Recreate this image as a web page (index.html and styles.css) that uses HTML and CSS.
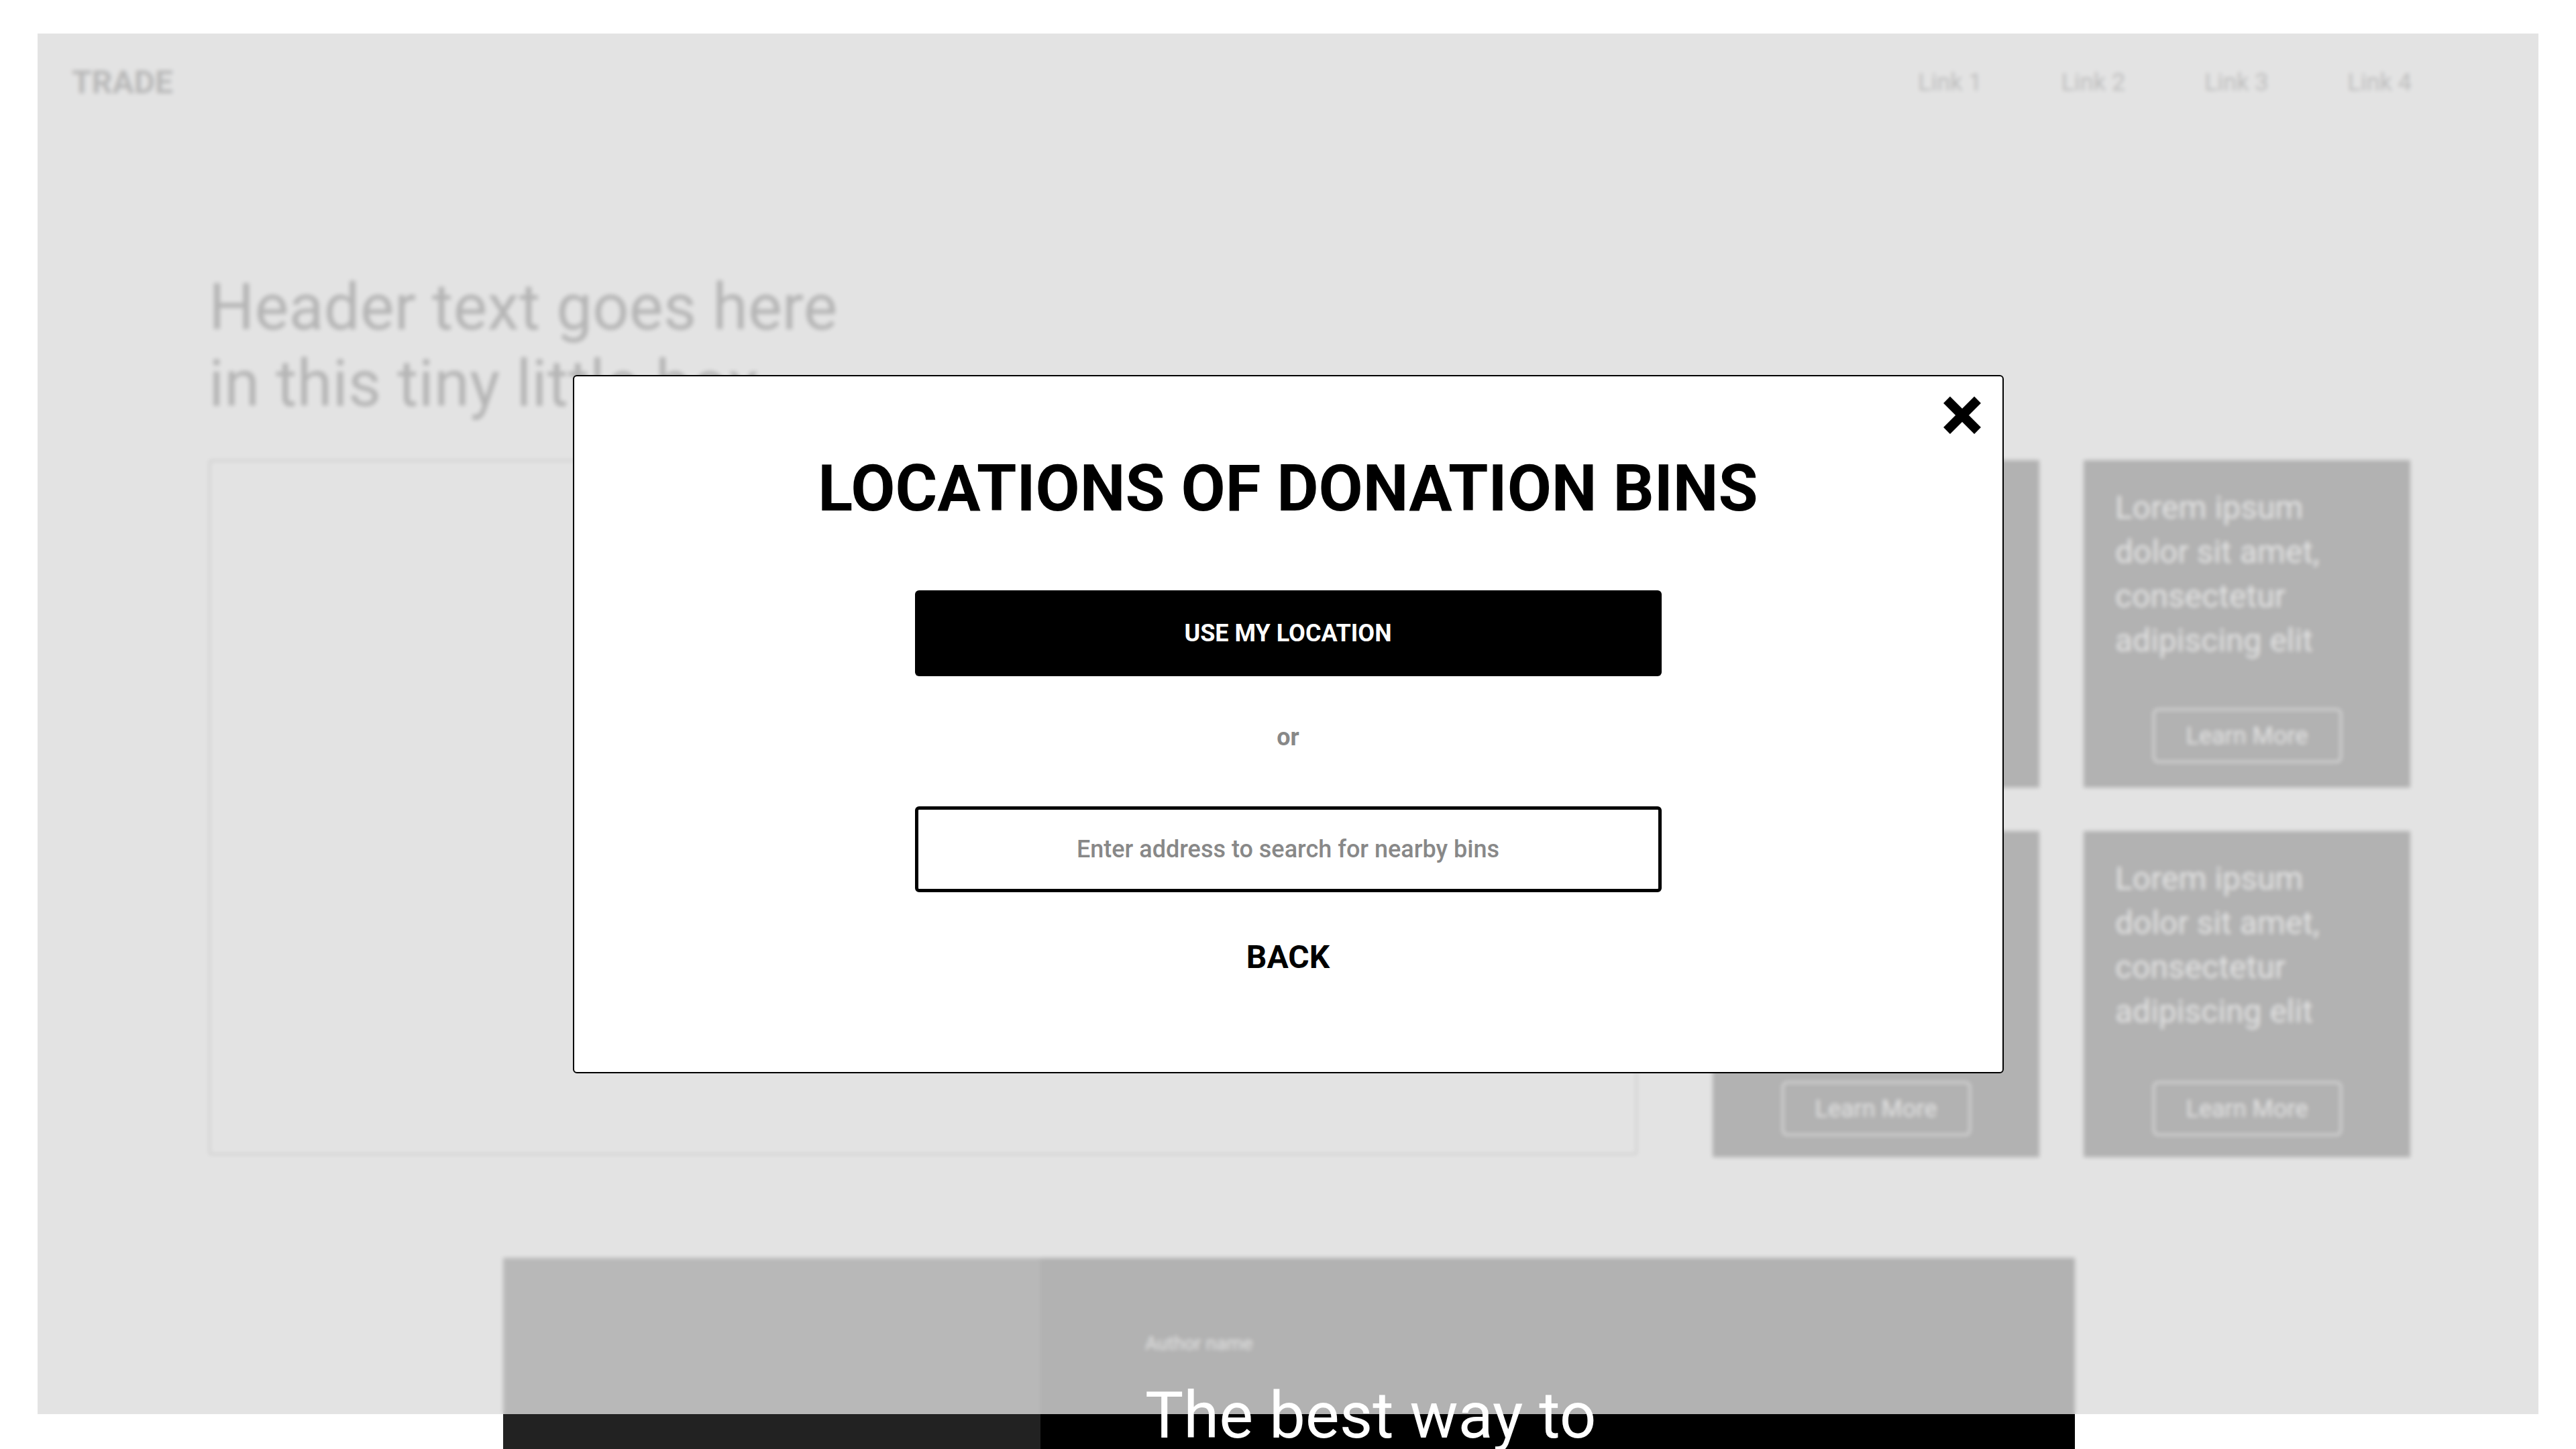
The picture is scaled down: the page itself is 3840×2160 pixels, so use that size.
FILE: index.html
```html
<!DOCTYPE html>
<html lang="en">
<head>
<meta charset="utf-8">
<title>Locations of donation bins</title>
<link rel="stylesheet" href="styles.css">
</head>
<body>
<div class="page">
  <header class="nav">
    <div class="logo">TRADE</div>
    <nav class="links">
      <a class="link">Link 1</a>
      <a class="link">Link 2</a>
      <a class="link">Link 3</a>
      <a class="link">Link 4</a>
    </nav>
  </header>

  <section class="hero">
    <h1 class="hero-title">Header text goes here<br>in this tiny little box</h1>
    <div class="hero-row">
      <div class="hero-box"></div>
      <div class="card-grid">
        <div class="card">
          <p class="card-text">Lorem ipsum dolor sit amet, consectetur adipiscing elit</p>
          <a class="card-btn">Learn More</a>
        </div>
        <div class="card">
          <p class="card-text">Lorem ipsum dolor sit amet, consectetur adipiscing elit</p>
          <a class="card-btn">Learn More</a>
        </div>
        <div class="card">
          <p class="card-text">Lorem ipsum dolor sit amet, consectetur adipiscing elit</p>
          <a class="card-btn">Learn More</a>
        </div>
        <div class="card">
          <p class="card-text">Lorem ipsum dolor sit amet, consectetur adipiscing elit</p>
          <a class="card-btn">Learn More</a>
        </div>
      </div>
    </div>
  </section>

  <section class="testimonial">
    <div class="t-photo"></div>
    <div class="t-body">
      <p class="t-author">Author name</p>
      <p class="t-quote">The best way to</p>
    </div>
  </section>
</div>

<div class="overlay">
  <div class="modal">
    <button class="modal-close" aria-label="Close">
      <svg viewBox="0 0 56 56" width="56" height="56"><path d="M5 5L51 51M51 5L5 51" stroke="#000" stroke-width="14" stroke-linecap="butt" fill="none"/></svg>
    </button>
    <h2 class="modal-title">LOCATIONS OF DONATION BINS</h2>
    <button class="btn-primary">USE MY LOCATION</button>
    <p class="modal-or">or</p>
    <input class="modal-input" type="text" placeholder="Enter address to search for nearby bins">
    <button class="btn-back">BACK</button>
  </div>
</div>
</body>
</html>
```

FILE: styles.css
```css
* { box-sizing: border-box; }

html, body {
  margin: 0;
  padding: 0;
}

body {
  width: 3840px;
  height: 2160px;
  overflow: hidden;
  background: #ffffff;
  font-family: Roboto, "Liberation Sans", sans-serif;
  color: #000;
}

/* ---------- underlying page ---------- */
.page {
  width: 3840px;
}

.nav {
  display: flex;
  justify-content: space-between;
  align-items: center;
  padding: 94px 245px 0 107px;
}

.logo {
  font-size: 48px;
  font-weight: 700;
  color: #222;
}

.links {
  display: flex;
  gap: 118px;
}

.link {
  font-size: 36px;
  color: #333;
}

.hero {
  padding: 250px 246px 0 311px;
}

.hero-title {
  margin: 0;
  font-size: 96px;
  line-height: 114px;
  font-weight: 400;
  color: #111;
}

.hero-row {
  display: flex;
  gap: 112px;
  margin-top: 56px;
}

.hero-box {
  width: 2130px;
  height: 1037px;
  border: 3px solid #9a9a9a;
  border-radius: 4px;
}

.card-grid {
  display: grid;
  grid-template-columns: 487px 487px;
  grid-template-rows: 488px 486px;
  column-gap: 66px;
  row-gap: 65px;
  margin-top: 1px;
}

.card {
  background: #000;
  padding: 38px 47px 37px;
  display: flex;
  flex-direction: column;
}

.card:nth-child(n+3) {
  padding-bottom: 32px;
}

.card-text {
  margin: 0;
  max-width: 330px;
  font-size: 48px;
  line-height: 66px;
  color: #fff;
}

.card-btn {
  margin-top: auto;
  align-self: center;
  width: 282px;
  height: 81px;
  border: 3px solid #d0d0d0;
  border-radius: 8px;
  display: flex;
  align-items: center;
  justify-content: center;
  font-size: 36px;
  color: #fff;
}

.testimonial {
  display: flex;
  margin: 150px 0 0 750px;
  width: 2343px;
  height: 420px;
}

.t-photo {
  width: 801px;
  background: #222;
}

.t-body {
  flex: 1;
  background: #000;
  padding: 111px 0 0 156px;
}

.t-author {
  margin: 0;
  font-size: 28px;
  color: #fff;
}

.t-quote {
  position: relative;
  z-index: 2;
  margin: 35px 0 0;
  font-size: 96px;
  font-weight: 400;
  color: #fff;
  white-space: nowrap;
}

/* ---------- overlay + modal ---------- */
.overlay {
  position: fixed;
  top: 50px;
  left: 56px;
  right: 56px;
  bottom: 52px;
  z-index: 1;
  background: rgba(220, 220, 220, 0.808);
  backdrop-filter: blur(3px);
  display: flex;
  align-items: center;
  justify-content: center;
}

.modal {
  position: relative;
  width: 2133px;
  height: 1041px;
  background: #fff;
  border: 2px solid #000;
  border-radius: 6px;
  padding-top: 111px;
  display: flex;
  flex-direction: column;
  align-items: center;
}

.modal-close {
  position: absolute;
  top: 30px;
  right: 32px;
  width: 56px;
  height: 56px;
  padding: 0;
  border: 0;
  background: none;
  display: block;
}

.modal-close svg { display: block; }

.modal-title {
  margin: 0;
  font-size: 96px;
  font-weight: 700;
  color: #000;
}

.btn-primary {
  margin-top: 96px;
  width: 1113px;
  height: 128px;
  border: 0;
  border-radius: 6px;
  background: #000;
  color: #fff;
  font-family: Roboto, "Liberation Sans", sans-serif;
  font-size: 36px;
  font-weight: 700;
}

.modal-or {
  margin: 70px 0 0;
  font-size: 36px;
  font-weight: 700;
  color: #888;
}

.modal-input {
  margin-top: 82px;
  width: 1113px;
  height: 128px;
  border: 5px solid #000;
  border-radius: 6px;
  background: #fff;
  text-align: center;
  font-family: Roboto, "Liberation Sans", sans-serif;
  font-size: 36px;
  font-weight: 500;
  color: #000;
  outline: none;
}

.modal-input::placeholder {
  color: #888;
  opacity: 1;
}

.btn-back {
  margin-top: 68px;
  padding: 0;
  border: 0;
  background: none;
  font-family: Roboto, "Liberation Sans", sans-serif;
  font-size: 48px;
  font-weight: 700;
  color: #000;
}
```
